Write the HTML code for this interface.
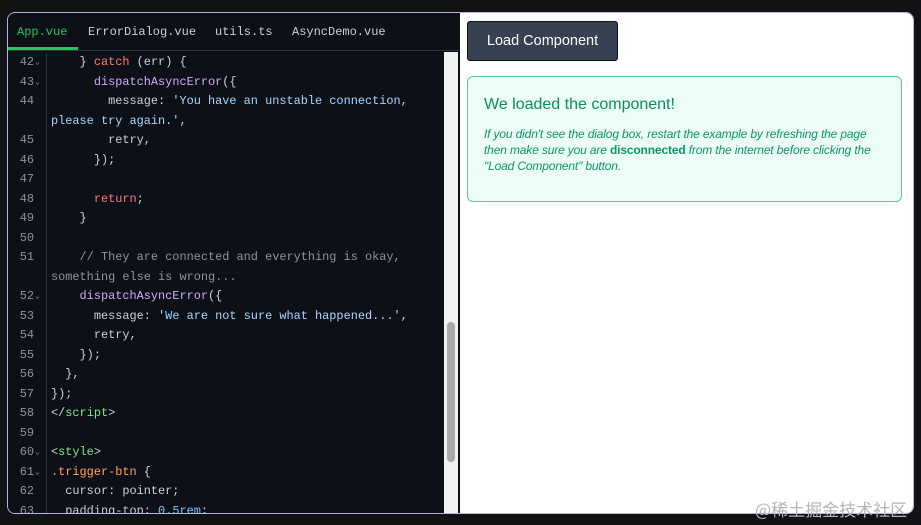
<!DOCTYPE html>
<html><head><meta charset="utf-8"><style>
*{margin:0;padding:0;box-sizing:border-box}
body{width:921px;height:525px;background:#111214;position:relative;overflow:hidden;font-family:"Liberation Sans",sans-serif}
#frame{position:absolute;left:7px;top:12px;width:907px;height:502px;border:1px solid #b8b4e0;border-radius:8px;overflow:hidden;background:#0d1117}
#ed{position:absolute;left:0;top:0;width:450px;height:100%;background:#0d1117}
#tabs{height:38px;border-bottom:1px solid #30363d;position:relative;font-family:"Liberation Mono",monospace;font-size:12px;color:#c9d1d9}
#tabs span{position:absolute;top:12px}
#ul{position:absolute;left:0;top:34px;width:70px;height:3px;background:#22c55e}
#code{position:absolute;left:0;top:40px;width:436px;height:461px;overflow:hidden;font-family:"Liberation Mono",monospace;font-size:11.9px;line-height:19.5px;color:#c9d1d9}
#gut{position:absolute;left:0;top:-2px;width:39px;height:480px;border-right:1px solid #30363d}
.r{position:absolute;left:0;width:436px;white-space:pre;height:19.5px}
.n{position:absolute;left:0;width:26px;text-align:right;color:#8b949e}
.f{position:absolute;left:27px;color:#8b949e;font-size:8px}
.c{position:absolute;left:43px}
.k{color:#ff7b72}.fn{color:#d2a8ff}.s{color:#a5d6ff}.t{color:#7ee787}.cm{color:#8b949e}.sel{color:#ffa657}.v{color:#79c0ff}
#sb{position:absolute;left:436px;top:39px;width:14px;height:462px;background:#f1f1f1}
#th{position:absolute;left:3px;top:270px;width:8px;height:140px;background:#a8a8a8;border-radius:4px}
#div{position:absolute;left:450px;top:0;width:2px;height:100%;background:#0d1117}
#rp{position:absolute;left:452px;top:0;right:0;height:100%;background:#fff}
#btn{position:absolute;left:7px;top:8px;width:151px;height:40px;background:#374151;border:1px solid #111;border-radius:3px;color:#fff;font-size:14.5px;text-align:center;line-height:38px}
#box{position:absolute;left:7px;top:63px;width:435px;height:126px;background:#ecfdf5;border:1px solid #5fc6a0;border-radius:6px;color:#0e9466;font-family:"Liberation Sans",sans-serif}
#box h3{position:absolute;left:16px;top:19px;font-size:16px;font-weight:normal;color:#0f8a62}
#box p{position:absolute;left:16px;top:49px;width:404px;font-size:12px;line-height:16.2px;font-style:italic;letter-spacing:-0.15px}
#wm{position:absolute;left:755px;top:496px;font-family:"Noto Sans CJK SC",sans-serif;font-size:17px;color:#b5b5b5}
</style></head><body>
<div id="frame">
<div id="ed">
<div id="tabs"><span style="left:9px;color:#22c55e">App.vue</span><span style="left:80px">ErrorDialog.vue</span><span style="left:207px">utils.ts</span><span style="left:284px">AsyncDemo.vue</span><div id="ul"></div></div>
<div id="code"><div id="gut"></div>
<div class="r" style="top:0"><span class="n">42</span><span class="f">⌄</span><span class="c">    } <span class="k">catch</span> (err) {</span></div>
<div class="r" style="top:19.5px"><span class="n">43</span><span class="f">⌄</span><span class="c">      <span class="fn">dispatchAsyncError</span>({</span></div>
<div class="r" style="top:39px"><span class="n">44</span><span class="c">        message: <span class="s">'You have an unstable connection,</span></span></div>
<div class="r" style="top:58.5px"><span class="c"><span class="s">please try again.'</span>,</span></div>
<div class="r" style="top:78px"><span class="n">45</span><span class="c">        retry,</span></div>
<div class="r" style="top:97.5px"><span class="n">46</span><span class="c">      });</span></div>
<div class="r" style="top:117px"><span class="n">47</span></div>
<div class="r" style="top:136.5px"><span class="n">48</span><span class="c">      <span class="k">return</span>;</span></div>
<div class="r" style="top:156px"><span class="n">49</span><span class="c">    }</span></div>
<div class="r" style="top:175.5px"><span class="n">50</span></div>
<div class="r" style="top:195px"><span class="n">51</span><span class="c cm">    // They are connected and everything is okay,</span></div>
<div class="r" style="top:214.5px"><span class="c cm">something else is wrong...</span></div>
<div class="r" style="top:234px"><span class="n">52</span><span class="f">⌄</span><span class="c">    <span class="fn">dispatchAsyncError</span>({</span></div>
<div class="r" style="top:253.5px"><span class="n">53</span><span class="c">      message: <span class="s">'We are not sure what happened...'</span>,</span></div>
<div class="r" style="top:273px"><span class="n">54</span><span class="c">      retry,</span></div>
<div class="r" style="top:292.5px"><span class="n">55</span><span class="c">    });</span></div>
<div class="r" style="top:312px"><span class="n">56</span><span class="c">  },</span></div>
<div class="r" style="top:331.5px"><span class="n">57</span><span class="c">});</span></div>
<div class="r" style="top:351px"><span class="n">58</span><span class="c">&lt;/<span class="t">script</span>&gt;</span></div>
<div class="r" style="top:370.5px"><span class="n">59</span></div>
<div class="r" style="top:390px"><span class="n">60</span><span class="f">⌄</span><span class="c">&lt;<span class="t">style</span>&gt;</span></div>
<div class="r" style="top:409.5px"><span class="n">61</span><span class="f">⌄</span><span class="c"><span class="sel">.trigger-btn</span> {</span></div>
<div class="r" style="top:429px"><span class="n">62</span><span class="c">  cursor: pointer;</span></div>
<div class="r" style="top:448.5px"><span class="n">63</span><span class="c">  padding-top: <span class="v">0.5rem</span>;</span></div>
</div>
<div id="sb"><div id="th"></div></div>
</div>
<div id="div"></div>
<div id="rp">
<div id="btn">Load Component</div>
<div id="box"><h3>We loaded the component!</h3>
<p>If you didn't see the dialog box, restart the example by refreshing the page<br>then make sure you are <b style="font-style:normal">disconnected</b> from the internet before clicking the<br>"Load Component" button.</p></div>
</div>
</div>
<div id="wm">@稀土掘金技术社区</div>
</body></html>
